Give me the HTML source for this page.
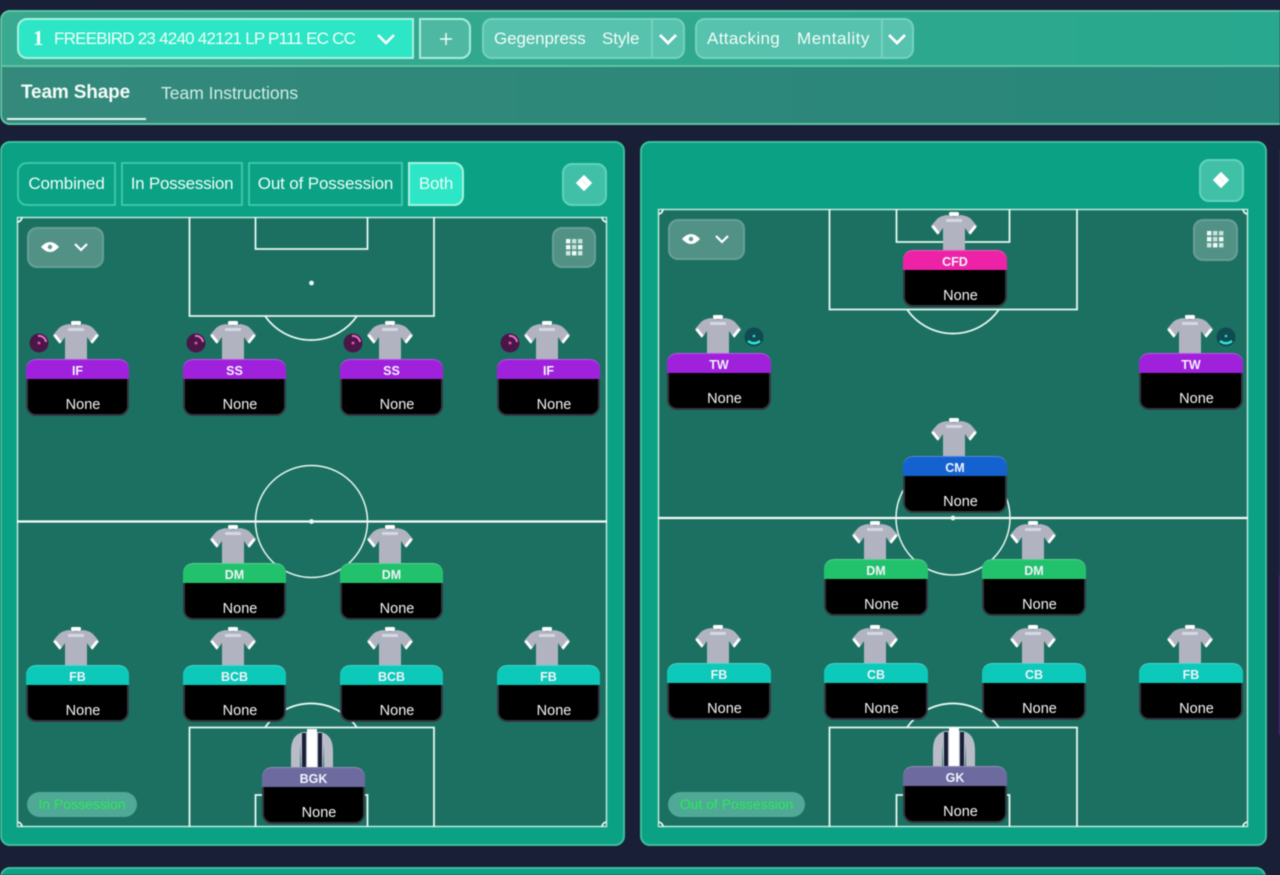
<!DOCTYPE html>
<html lang="en"><head><meta charset="utf-8"><title>Team Shape</title>
<style>
*{box-sizing:border-box}
html,body{margin:0;padding:0;width:1280px;height:875px;overflow:hidden;background:#181f37;font-family:"Liberation Sans",sans-serif;color:#fff}
#root{position:relative;width:1280px;height:875px;overflow:hidden;filter:blur(.45px)}
.a{position:absolute}
.panel{position:absolute;background:#0aa184;border:2px solid #3fbd9c;border-radius:10px}
.pitch{position:absolute;background:#1c7061}
.top1{position:absolute;left:0;top:10px;width:1290px;height:57px;background:linear-gradient(90deg,#39a98f,#28a88e);border:2px solid #5fc4a4;border-radius:10px 0 0 0}
.top2{position:absolute;left:0;top:67px;width:1290px;height:58px;background:linear-gradient(90deg,#34897b,#27877a);border:2px solid #5fc4a4;border-top:0;border-radius:0 0 0 10px}
.t{position:absolute;white-space:nowrap;line-height:1}
.sel{position:absolute;left:17px;top:18px;width:397px;height:41px;background:#2ce6c6;border:2px solid #a6f2e0;border-radius:10px 0 0 10px}
.plus{position:absolute;left:419px;top:18px;width:52px;height:41px;background:#4eb8a2;border:2px solid #a6efdc;border-radius:0 10px 10px 0}
.drop{position:absolute;top:18px;height:41px;background:#57c2ae;border:2px solid #74d2bd;border-radius:10px}
.sep{position:absolute;top:18px;width:2px;height:41px;background:#74d2bd}
.tab{position:absolute;top:162px;height:44px;border:2px solid #3fc5a8;font-size:17px;line-height:40px;text-align:center;white-space:nowrap;letter-spacing:-.15px;color:#eefdf8}
.gbtn{position:absolute;background:rgba(255,255,255,.24);border:2px solid rgba(255,255,255,.12);border-radius:10px}
.dbtn{position:absolute;width:45px;height:43px;background:#41c0a8;border:2px solid #62d2bb;border-radius:10px}
.pill{position:absolute;height:25px;background:#50a896;border-radius:13px;color:#27ee55;font-size:14px;line-height:25px;text-align:center;white-space:nowrap}
.c{position:absolute;width:103px;height:57px;background:#000;border:2px solid #33373f;border-radius:10px;border-top:0}
.c.w{width:104px}
.c b{position:absolute;left:-2px;right:-2px;top:0;height:20px;border-radius:10px 10px 0 0;font-size:12.500px;line-height:24px;text-align:center;color:#f2f2fa;box-shadow:inset 0 1px 0 rgba(255,255,255,.25)}
.c span{position:absolute;left:5.500px;right:-5.500px;top:38px;font-size:14.500px;line-height:16px;text-align:center;color:#f4f4f4}
.c svg{position:absolute;left:25px;top:-38px;width:46px;height:38px}
.c.w svg{left:26px}
.p{background:#a021dc}.g{background:#22c26c}.e{background:#0cc9b9}.k{background:#ee22a6}.u{background:#1461d0}.v{background:#6c6a9f}
</style></head><body><div id="root">

<svg width="0" height="0" style="position:absolute"><defs>
<symbol id="sh" viewBox="0 0 46 38">
<path d="M16 3Q9 4 6 7L0 14 7 23 12 16V38H34V16L39 23 46 14 40 7Q37 4 30 3Q23 6 16 3Z" fill="#b1b3c1"/>
<path d="M1.500 14 7.500 21.500M44.500 14 38.500 21.500" stroke="#fff" stroke-width="3" fill="none"/>
<rect x="18" y="0" width="10" height="4" rx="1.500" fill="#fff"/>
<rect x="15" y="7" width="16" height="3" rx="1" fill="#d6d8e2"/>
</symbol>
<symbol id="gk" viewBox="0 0 46 38">
<path d="M14 3Q2 6 2 22V38H11V14L12 38H34L35 14V38H44V22Q44 6 32 3Z" fill="#b9bcc8"/>
<rect x="13" y="4" width="4" height="34" fill="#1a1f38"/>
<rect x="18" y="0" width="10" height="38" fill="#fff"/>
<rect x="29" y="4" width="4" height="34" fill="#1a1f38"/>
</symbol>
<symbol id="grid" viewBox="0 0 17 17">
<g fill="#f2fcf9"><rect width="4.400" height="4.400"/><rect x="6" width="4.400" height="4.400" opacity=".75"/><rect x="12" width="4.400" height="4.400" opacity=".75"/><rect y="6" width="4.400" height="4.400"/><rect x="6" y="6" width="4.400" height="4.400" opacity=".75"/><rect x="12" y="6" width="4.400" height="4.400"/><rect y="12" width="4.400" height="4.400" opacity=".8"/><rect x="6" y="12" width="4.400" height="4.400"/><rect x="12" y="12" width="4.400" height="4.400" opacity=".8"/></g>
</symbol>
</defs></svg>

<!-- top panel -->
<div class="top1"></div><div class="top2"></div>
<div class="sel"></div>
<div class="t" style="left:33px;top:26px;font:bold 21px 'Liberation Serif',serif;color:#fff">1</div>
<div class="t" style="left:54px;top:30px;font-size:17px;letter-spacing:-.77px;color:#f2fdf9">FREEBIRD 23 4240 42121 LP P111 EC CC</div>
<svg class="a" style="left:376px;top:32px" width="20" height="14"><path d="M2 3 10 11 18 3" stroke="#fff" stroke-width="2.600" fill="none"/></svg>
<div class="plus"></div>
<svg class="a" style="left:439px;top:32px" width="14" height="14"><path d="M7 1V13M1 7H13" stroke="#f2fdf9" stroke-width="1.500"/></svg>

<div class="drop" style="left:482px;width:203px"></div><div class="sep" style="left:651px"></div>
<div class="t" style="left:494px;top:30px;font-size:17px;color:#f2fdf9;letter-spacing:-.1px">Gegenpress</div>
<div class="t" style="left:602px;top:30px;font-size:17px;color:#f2fdf9;letter-spacing:-.1px">Style</div>
<svg class="a" style="left:658px;top:32px" width="20" height="14"><path d="M2 3 10 11 18 3" stroke="#fff" stroke-width="2.800" fill="none"/></svg>

<div class="drop" style="left:695px;width:219px"></div><div class="sep" style="left:881px"></div>
<div class="t" style="left:707px;top:30px;font-size:17px;color:#f2fdf9;letter-spacing:.35px">Attacking</div>
<div class="t" style="left:797px;top:30px;font-size:17px;color:#f2fdf9;letter-spacing:.55px">Mentality</div>
<svg class="a" style="left:887px;top:32px" width="20" height="14"><path d="M2 3 10 11 18 3" stroke="#fff" stroke-width="2.800" fill="none"/></svg>

<div class="t" style="left:21px;top:83px;font-size:19px;font-weight:bold;color:#f4fbf8;letter-spacing:-.15px">Team Shape</div>
<div class="t" style="left:161px;top:85px;font-size:17.500px;color:#cfeee5;letter-spacing:0">Team Instructions</div>
<div class="a" style="left:7px;top:118px;width:139px;height:2px;background:#e4f6f0"></div>

<!-- panels -->
<div class="panel" style="left:0;top:141px;width:625px;height:705px"></div>
<div class="panel" style="left:640px;top:141px;width:627px;height:705px"></div>
<div class="panel" style="left:0;top:867px;width:1266px;height:30px"></div>
<div class="a" style="left:1279px;top:150px;width:1px;height:425px;background:#2a2f55"></div>
<div class="a" style="left:1278.500px;top:575px;width:1.500px;height:160px;background:#5a2a90"></div>

<div class="tab" style="left:17px;width:99px;border-radius:10px 0 0 10px">Combined</div>
<div class="tab" style="left:121px;width:122px;letter-spacing:-.25px">In Possession</div>
<div class="tab" style="left:248px;width:155px">Out of Possession</div>
<div class="tab" style="left:408px;width:56px;background:#2ce6c6;border-color:#a6f2e0;border-radius:0 10px 10px 0">Both</div>

<div class="dbtn" style="left:562px;top:163px"></div>
<div class="dbtn" style="left:1199px;top:159px"></div>
<svg class="a" style="left:575px;top:174px" width="18" height="18"><path d="M9 1.500 16.500 9 9 16.500 1.500 9Z" fill="#fff" stroke="#fff" stroke-linejoin="round"/><path d="M7 6 12 11" stroke="#c6efe4" stroke-width=".8"/></svg>
<svg class="a" style="left:1212px;top:171px" width="18" height="18"><path d="M9 1.500 16.500 9 9 16.500 1.500 9Z" fill="#fff" stroke="#fff" stroke-linejoin="round"/><path d="M7 6 12 11" stroke="#c6efe4" stroke-width=".8"/></svg>

<div class="pitch" style="left:17px;top:217px;width:590px;height:610px"></div>
<div class="pitch" style="left:658px;top:209px;width:590px;height:618px"></div>

<svg class="a" style="left:0;top:0" width="1280" height="875" fill="none" stroke="#e6f8f3" stroke-width="1.800">
<!-- left pitch -->
<rect x="17.500" y="217.500" width="589" height="609" stroke="#b9e9dc" stroke-width="1.500"/>
<path d="M189.500 217V316H434V217M255.500 217V249H367.500V217"/>
<path d="M265 316A56 56 0 0 0 357 316"/>
<circle cx="311.500" cy="283" r="1.500" fill="#fff"/>
<path d="M17 521.500H607" stroke-width="2.200" stroke="#f5fcfa"/>
<circle cx="311.500" cy="521.500" r="56" stroke-width="1.500"/>
<circle cx="311.500" cy="521.500" r="1.500" fill="#fff"/>
<path d="M189.500 827V727.500H434V827M255.500 827V795H367.500V827"/>
<path d="M265 727.500A56 56 0 0 1 357 727.500"/>
<path d="M17.500 222A5 5 0 0 0 22 217M602 217A5 5 0 0 0 606.500 222M17.500 822A5 5 0 0 1 22 827M602 827A5 5 0 0 1 606.500 822"/>
<!-- right pitch -->
<rect x="658.500" y="209.500" width="589" height="617" stroke="#b9e9dc" stroke-width="1.500"/>
<path d="M829.500 209V309.500H1077V209M896.500 209V242H1009.500V209"/>
<path d="M907 309.500A56 56 0 0 0 999 309.500"/>
<path d="M658 518H1248" stroke-width="2.200" stroke="#f5fcfa"/>
<circle cx="953" cy="518" r="57" stroke-width="1.500"/>
<circle cx="953" cy="518" r="1.500" fill="#fff"/>
<path d="M829.500 827V727.500H1077V827M896.500 827V795H1009.500V827"/>
<path d="M907 727.500A56 56 0 0 1 999 727.500"/>
<path d="M658.500 214A5 5 0 0 0 663 209M1243 209A5 5 0 0 0 1247.500 214M658.500 822A5 5 0 0 1 663 827M1243 827A5 5 0 0 1 1247.500 822"/>
</svg>

<!-- eye + grid -->
<div class="gbtn" style="left:27px;top:227px;width:77px;height:41px"></div>
<svg class="a" style="left:40px;top:240px" width="52" height="14"><path d="M1 7Q10 -3 19 7Q10 17 1 7Z" fill="#fff"/><circle cx="10" cy="7" r="2.200" fill="#5a9a8c"/><path d="M35 4 41 10 47 4" stroke="#fff" stroke-width="2.200" fill="none"/></svg>
<div class="gbtn" style="left:552px;top:227px;width:44px;height:41px"></div>
<svg class="a" style="left:566px;top:239px" width="17" height="17"><use href="#grid"/></svg>
<div class="gbtn" style="left:668px;top:219px;width:77px;height:41px"></div>
<svg class="a" style="left:681px;top:232px" width="52" height="14"><path d="M1 7Q10 -3 19 7Q10 17 1 7Z" fill="#fff"/><circle cx="10" cy="7" r="2.200" fill="#5a9a8c"/><path d="M35 4 41 10 47 4" stroke="#fff" stroke-width="2.200" fill="none"/></svg>
<div class="gbtn" style="left:1193px;top:219px;width:45px;height:42px"></div>
<svg class="a" style="left:1207px;top:231px" width="17" height="17"><use href="#grid"/></svg>

<div class="pill" style="left:27px;top:792px;width:110px">In Possession</div>
<div class="pill" style="left:668px;top:792px;width:137px">Out of Possession</div>

<!-- left cards -->
<div class="c" style="left:26px;top:359px"><svg><use href="#sh"/></svg><b class="p">IF</b><span>None</span></div>
<div class="c" style="left:183px;top:359px"><svg><use href="#sh"/></svg><b class="p">SS</b><span>None</span></div>
<div class="c" style="left:340px;top:359px"><svg><use href="#sh"/></svg><b class="p">SS</b><span>None</span></div>
<div class="c" style="left:497px;top:359px"><svg><use href="#sh"/></svg><b class="p">IF</b><span>None</span></div>
<div class="c" style="left:183px;top:563px"><svg><use href="#sh"/></svg><b class="g">DM</b><span>None</span></div>
<div class="c" style="left:340px;top:563px"><svg><use href="#sh"/></svg><b class="g">DM</b><span>None</span></div>
<div class="c" style="left:26px;top:665px"><svg><use href="#sh"/></svg><b class="e">FB</b><span>None</span></div>
<div class="c" style="left:183px;top:665px"><svg><use href="#sh"/></svg><b class="e">BCB</b><span>None</span></div>
<div class="c" style="left:340px;top:665px"><svg><use href="#sh"/></svg><b class="e">BCB</b><span>None</span></div>
<div class="c" style="left:497px;top:665px"><svg><use href="#sh"/></svg><b class="e">FB</b><span>None</span></div>
<div class="c" style="left:262px;top:767px"><svg><use href="#gk"/></svg><b class="v">BGK</b><span>None</span></div>

<!-- right cards -->
<div class="c w" style="left:667px;top:353px"><svg><use href="#sh"/></svg><b class="p">TW</b><span>None</span></div>
<div class="c w" style="left:1139px;top:353px"><svg><use href="#sh"/></svg><b class="p">TW</b><span>None</span></div>
<div class="c w" style="left:903px;top:250px"><svg><use href="#sh"/></svg><b class="k">CFD</b><span>None</span></div>
<div class="c w" style="left:903px;top:456px"><svg><use href="#sh"/></svg><b class="u">CM</b><span>None</span></div>
<div class="c w" style="left:824px;top:559px"><svg><use href="#sh"/></svg><b class="g">DM</b><span>None</span></div>
<div class="c w" style="left:982px;top:559px"><svg><use href="#sh"/></svg><b class="g">DM</b><span>None</span></div>
<div class="c w" style="left:667px;top:663px"><svg><use href="#sh"/></svg><b class="e">FB</b><span>None</span></div>
<div class="c w" style="left:824px;top:663px"><svg><use href="#sh"/></svg><b class="e">CB</b><span>None</span></div>
<div class="c w" style="left:982px;top:663px"><svg><use href="#sh"/></svg><b class="e">CB</b><span>None</span></div>
<div class="c w" style="left:1139px;top:663px"><svg><use href="#sh"/></svg><b class="e">FB</b><span>None</span></div>
<div class="c w" style="left:903px;top:766px"><svg><use href="#gk"/></svg><b class="v">GK</b><span>None</span></div>

<!-- badges -->
<svg class="a" style="left:29px;top:333px" width="20" height="20"><circle cx="10" cy="10" r="9.500" fill="#4a1648"/><path d="M9 3A7 7 0 0 1 17 9" stroke="#f070c8" stroke-width="2" fill="none"/><circle cx="10" cy="10" r="1.500" fill="#e050a8"/></svg>
<svg class="a" style="left:186px;top:333px" width="20" height="20"><circle cx="10" cy="10" r="9.500" fill="#4a1648"/><path d="M9 3A7 7 0 0 1 17 9" stroke="#f070c8" stroke-width="2" fill="none"/><circle cx="10" cy="10" r="1.500" fill="#e050a8"/></svg>
<svg class="a" style="left:343px;top:333px" width="20" height="20"><circle cx="10" cy="10" r="9.500" fill="#4a1648"/><path d="M9 3A7 7 0 0 1 17 9" stroke="#f070c8" stroke-width="2" fill="none"/><circle cx="10" cy="10" r="1.500" fill="#e050a8"/></svg>
<svg class="a" style="left:500px;top:333px" width="20" height="20"><circle cx="10" cy="10" r="9.500" fill="#4a1648"/><path d="M9 3A7 7 0 0 1 17 9" stroke="#f070c8" stroke-width="2" fill="none"/><circle cx="10" cy="10" r="1.500" fill="#e050a8"/></svg>
<svg class="a" style="left:744px;top:327px" width="20" height="20"><circle cx="10" cy="10" r="9.500" fill="#0f4a50"/><path d="M4 14Q10 18.500 16 14" stroke="#2ce6d6" stroke-width="2.500" fill="none"/><circle cx="10" cy="9" r="1.300" fill="#2ce6d6"/></svg>
<svg class="a" style="left:1216px;top:327px" width="20" height="20"><circle cx="10" cy="10" r="9.500" fill="#0f4a50"/><path d="M4 14Q10 18.500 16 14" stroke="#2ce6d6" stroke-width="2.500" fill="none"/><circle cx="10" cy="9" r="1.300" fill="#2ce6d6"/></svg>

</div></body></html>
